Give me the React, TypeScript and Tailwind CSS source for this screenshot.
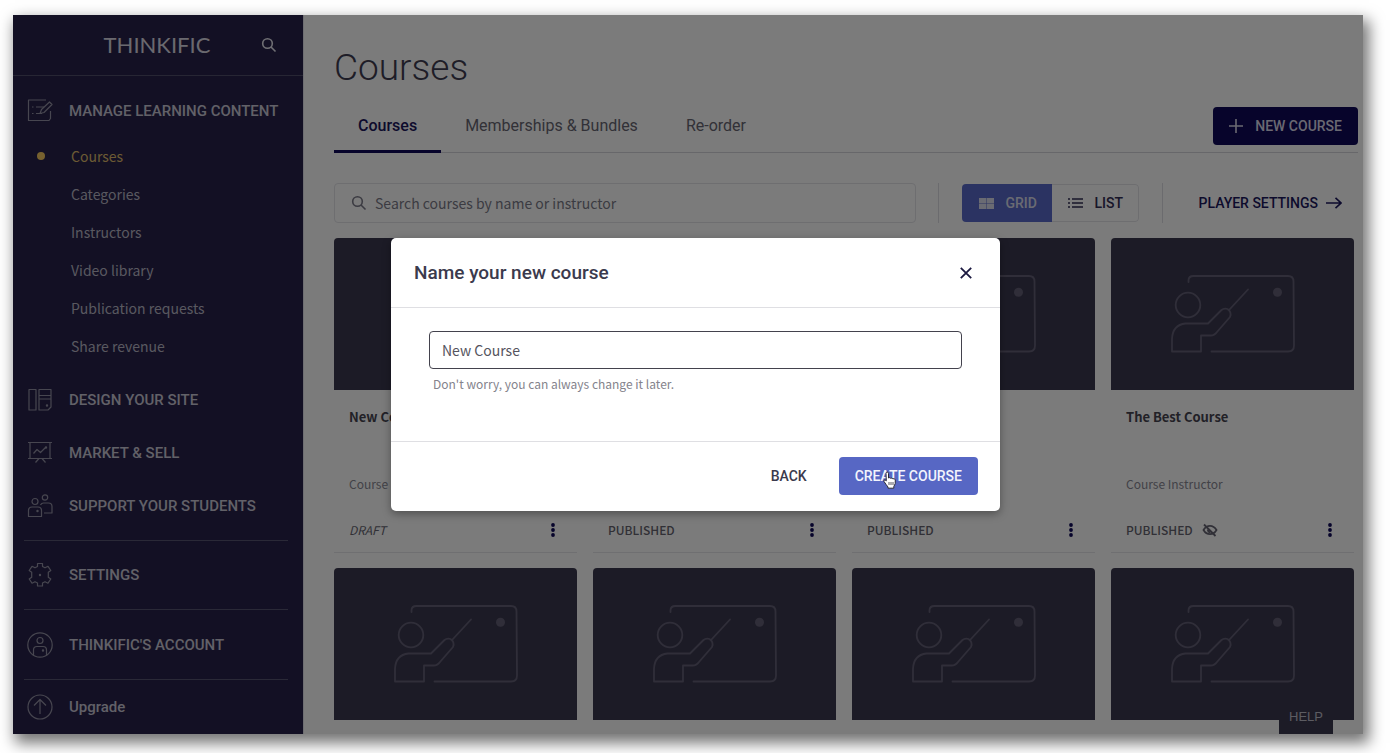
import React from "react";

const heading = "font-[Roboto,sans-serif]";

interface IconProps {
  className?: string;
  children: React.ReactNode;
}

const LineIcon: React.FC<IconProps> = ({ className = "", children }) => (
  <svg
    viewBox="0 0 26 26"
    className={`w-[26px] h-[26px] shrink-0 ${className}`}
    fill="none"
    stroke="currentColor"
    strokeWidth="1.2"
    strokeLinejoin="round"
    aria-hidden="true"
  >
    {children}
  </svg>
);

const ContentIcon = () => (
  <LineIcon>
    <path d="M19 2H1.500v20.500h20.500l1.500-2V13" />
    <path d="M5 9h1.500M5 15.500h1.500M9 9h8M9 15.500h6" />
    <path d="M13 15.500l1.500-4L22.500 4l2.500 2.500-8 8z" />
  </LineIcon>
);

const DesignIcon = () => (
  <LineIcon>
    <path d="M2 2.500h7v20.500H2zM12 2.500h12v6H12zM12 8.500h12v11.500l-3 3h-9zM12 12h12" />
    <circle cx="20" cy="18.500" r="0.600" fill="currentColor" />
  </LineIcon>
);

const MarketIcon = () => (
  <LineIcon>
    <path d="M1 2.500h24M3 2.500v15.500M23 2.500v15.500M1 18.500h24M12 18.500l-3.500 4M15 18.500l3.500 4" />
    <path d="M6.500 13.500l3.500-4 3.500 3 5-5" />
    <circle cx="19" cy="7.500" r="0.600" fill="currentColor" />
  </LineIcon>
);

const StudentsIcon = () => (
  <LineIcon>
    <circle cx="8" cy="8.500" r="3" />
    <circle cx="18" cy="4.500" r="2.700" />
    <path d="M1.500 23.500v-6q0-3.500 3.500-3.500h6q3.500 0 3.500 3.500v6z" />
    <path d="M13.500 12q1-2 3-2h5q3.500 0 3.500 3.500v6.500h-8" />
    <circle cx="10.500" cy="18" r="0.600" fill="currentColor" />
  </LineIcon>
);

const GearIcon = () => (
  <LineIcon>
    <path d="M10.500 1.500h5v3l2.500 1.300 3-1.500 2.800 4.200-2.500 1.800v4.900l2.500 1.800-2.800 4.200-3-1.500-2.500 1.300v3h-5v-3L8 19.700l-3 1.500L2.200 17l2.500-1.800v-4.900L2.200 8.500 5 4.300l3 1.500 2.500-1.300z" />
    <circle cx="13" cy="13" r="0.600" fill="currentColor" />
  </LineIcon>
);

const AccountIcon = () => (
  <LineIcon>
    <circle cx="13" cy="13" r="12.200" />
    <circle cx="13" cy="8.500" r="3" />
    <path d="M6.500 23v-5q0-3.500 3.500-3.500h6q3.500 0 3.500 3.500v5" />
    <circle cx="16" cy="18.500" r="0.600" fill="currentColor" />
  </LineIcon>
);

const UpgradeIcon = () => (
  <LineIcon>
    <circle cx="13" cy="13" r="12" />
    <path d="M13 20V6M7 11.500L13 5.500l6 6" />
  </LineIcon>
);

const SearchIcon = ({ className = "" }: { className?: string }) => (
  <svg
    viewBox="0 0 16 16"
    className={`w-4 h-4 shrink-0 ${className}`}
    fill="none"
    stroke="currentColor"
    strokeWidth="1.6"
    aria-hidden="true"
  >
    <circle cx="6.500" cy="6.500" r="4.800" />
    <path d="M10 10l4.500 4.500" />
  </svg>
);

const TeacherArt = () => (
  <svg
    viewBox="0 0 128 82"
    className="w-32 h-[82px] text-[#605d73]"
    fill="none"
    stroke="currentColor"
    strokeWidth="1.8"
    strokeLinecap="round"
    strokeLinejoin="round"
    aria-hidden="true"
  >
    <path d="M19.500 9V7.500q0-4.500 5-4.500h94.500q5.500 0 5.500 5.500l.5 64q0 6-6 6H42.500" />
    <circle cx="19" cy="32" r="12.300" />
    <circle cx="108.500" cy="19.300" r="4.500" fill="currentColor" stroke="none" />
    <path d="M3 78.500V66Q3.500 52 16.500 50.500H39L52.500 37q2.500-2 6-1 4.500 3 2.500 8L48 59q-2.500 3.500-6.500 3.500H32v16z" />
    <path d="M60.500 36.500l18.500-20" />
  </svg>
);

const EyeOffIcon = () => (
  <svg viewBox="0 0 16 16" className="w-4 h-4 text-[#62616f]" fill="none" stroke="currentColor" strokeWidth="1.8" aria-label="Hidden">
    <path d="M1.500 8Q4 3.800 8 3.800T14.500 8Q12 12.200 8 12.200T1.500 8z" />
    <path d="M5.800 7.500q.2 2.700 2.700 3" />
    <path d="M2 2.500l11.500 11.500" />
  </svg>
);

interface NavItemProps {
  icon: React.ReactNode;
  label: string;
  className: string;
}

const NavItem: React.FC<NavItemProps> = ({ icon, label, className }) => (
  <a href="#" className={`flex items-center gap-4 pl-[14px] text-[#8f8da0] ${className}`}>
    {icon}
    <span className={`${heading} text-[15px] leading-5 font-medium text-[#c4c2d0]`}>{label}</span>
  </a>
);

const subItems = ["Courses", "Categories", "Instructors", "Video library", "Publication requests", "Share revenue"];

const Divider = () => <div className="h-px ml-[11px] mr-[15px] bg-[#55526e]" />;

const Sidebar = () => (
  <nav className="w-[290px] shrink-0 bg-[#262148]">
    <div className="flex items-center justify-end h-[61px] border-b border-[#4f4c68] pr-[26px] gap-9">
      <span className="w-[136px] text-center font-[Lato,sans-serif] text-[22px] leading-7 text-[#d5d3df]">
        THINKIFIC
      </span>
      <button type="button" aria-label="Search" className="text-[#e0dfe8]">
        <SearchIcon />
      </button>
    </div>
    <div className="py-2">
      <NavItem icon={<ContentIcon />} label="MANAGE LEARNING CONTENT" className="h-[53px]" />
      <ul className="mb-2">
        {subItems.map((item, i) => (
          <li key={item} className="flex items-center h-[38px] pl-6">
            <span className={`w-2 h-2 rounded-full mr-[26px] ${i === 0 ? "bg-[#eec25e]" : ""}`} />
            <a href="#" className={`text-sm leading-5 ${i === 0 ? "text-[#d9b568]" : "text-[#b3b1c0]"}`}>
              {item}
            </a>
          </li>
        ))}
      </ul>
      <NavItem icon={<DesignIcon />} label="DESIGN YOUR SITE" className="h-[53px]" />
      <NavItem icon={<MarketIcon />} label="MARKET & SELL" className="h-[53px]" />
      <NavItem icon={<StudentsIcon />} label="SUPPORT YOUR STUDENTS" className="h-[53px]" />
    </div>
    <Divider />
    <NavItem icon={<GearIcon />} label="SETTINGS" className="h-[68px]" />
    <Divider />
    <NavItem icon={<AccountIcon />} label="THINKIFIC'S ACCOUNT" className="h-[69px]" />
    <Divider />
    <NavItem icon={<UpgradeIcon />} label="Upgrade" className="h-[54px]" />
  </nav>
);

interface Course {
  id: number;
  title?: string;
  instructor?: string;
  status?: string;
  hidden?: boolean;
}

const courses: Course[] = [
  { id: 1, title: "New Course", instructor: "Course Instructor", status: "DRAFT" },
  { id: 2, status: "PUBLISHED" },
  { id: 3, status: "PUBLISHED" },
  { id: 4, title: "The Best Course", instructor: "Course Instructor", status: "PUBLISHED", hidden: true },
  { id: 5 },
  { id: 6 },
  { id: 7 },
  { id: 8 },
];

const CourseCard: React.FC<{ course: Course }> = ({ course }) => (
  <article>
    <div className="flex items-center justify-center h-[152px] rounded-t bg-[#39374c]">
      <TeacherArt />
    </div>
    {course.status && (
      <div className="pt-[17px] px-[15px] pb-3 border-b border-[#dedee2]">
        <h2 className="h-5 text-[13px] leading-5 font-bold text-[#44434f]">{course.title}</h2>
        <p className="mt-[47px] h-5 text-xs leading-5 text-[#85848f]">{course.instructor}</p>
        <div className="mt-[26px] flex items-center gap-[9px] h-5">
          {course.status === "DRAFT" ? (
            <span className="text-xs leading-5 italic text-[#62616c]">DRAFT</span>
          ) : (
            <span className="text-xs leading-5 font-medium text-[#62616c]">{course.status}</span>
          )}
          {course.hidden && <EyeOffIcon />}
          <button type="button" aria-label="Course options" className="ml-auto mr-[7px] flex text-[#0e0856]">
            <svg viewBox="0 0 4 14" className="w-1 h-[14px]" fill="currentColor" aria-hidden="true">
              <circle cx="2" cy="2" r="1.900" />
              <circle cx="2" cy="7" r="1.900" />
              <circle cx="2" cy="12" r="1.900" />
            </svg>
          </button>
        </div>
      </div>
    )}
  </article>
);

const Toolbar = () => (
  <div className="flex items-center mt-[30px] mb-[15px]">
    <label className="flex flex-1 items-center gap-2 h-10 px-4 border border-[#dcdce1] rounded text-[#777684]">
      <SearchIcon />
      <input
        type="text"
        aria-label="Search courses"
        placeholder="Search courses by name or instructor"
        className="flex-1 text-sm leading-5 outline-none placeholder:text-[#777684]"
      />
    </label>
    <div className="w-px h-10 ml-[22px] mr-[23px] bg-[#d6d6dc]" />
    <div className={`flex h-[38px] rounded overflow-hidden ${heading} text-sm font-medium`}>
      <button type="button" className="flex items-center w-[90px] pl-[17px] gap-3 bg-[#5767c4] text-[#d5d6e6]">
        <svg viewBox="0 0 15 11" className="w-[15px] h-[11px]" fill="currentColor" aria-hidden="true">
          <path d="M0 0h7v5H0zM7.500 0H15v5H7.500zM0 5.500h7V11H0zM7.500 5.500H15V11H7.500z" />
        </svg>
        GRID
      </button>
      <button
        type="button"
        className="flex items-center w-[87px] pl-4 gap-3 border border-l-0 border-[#dcdce1] rounded-r text-[#302c52]"
      >
        <svg viewBox="0 0 15 10" className="w-[15px] h-[10px]" stroke="currentColor" strokeWidth="1.600" aria-hidden="true">
          <path d="M0 1h2M0 5h2M0 9h2M4 1h11M4 5h11M4 9h11" />
        </svg>
        LIST
      </button>
    </div>
    <div className="w-px h-10 ml-[23px] mr-9 bg-[#d6d6dc]" />
    <a href="#" className={`flex items-center gap-2 mr-3 ${heading} text-sm leading-5 font-medium text-[#1b165a]`}>
      PLAYER SETTINGS
      <svg viewBox="0 0 16 12" className="w-4 h-3" fill="none" stroke="currentColor" strokeWidth="1.600" aria-hidden="true">
        <path d="M0 6h15M9.500 .8L15 6l-5.500 5.200" />
      </svg>
    </a>
  </div>
);

const CoursesPage = () => (
  <main className="flex-1 bg-[#f7f7f7] border-l border-[#dddde4] pl-[30px] pr-[9px] pb-[14px]">
    <h1 className={`${heading} pt-[30px] pb-4 text-[37px] leading-[46px] font-light text-[#3d3b4f]`}>Courses</h1>
    <div className={`flex items-start justify-between h-[46px] -mr-1 border-b border-[#cfcfd5] ${heading}`}>
      <div className="flex h-[46px] text-base">
        <a href="#" className="px-6 h-[46px] leading-[38px] font-medium text-[#1b165a] border-b-[3px] border-[#0e0856]">
          Courses
        </a>
        <a href="#" className="px-6 leading-[38px] text-[#64636f]">
          Memberships &amp; Bundles
        </a>
        <a href="#" className="px-6 leading-[38px] text-[#64636f]">
          Re-order
        </a>
      </div>
      <button
        type="button"
        className="flex items-center gap-3 h-[38px] px-4 rounded bg-[#0e0856] text-sm font-medium text-[#d5d3e4]"
      >
        <svg viewBox="0 0 14 14" className="w-[14px] h-[14px]" stroke="currentColor" strokeWidth="1.600" aria-hidden="true">
          <path d="M7 0v14M0 7h14" />
        </svg>
        NEW COURSE
      </button>
    </div>
    <Toolbar />
    <div className="grid grid-cols-4 gap-x-4 gap-y-[15px]">
      {courses.map((course) => (
        <CourseCard key={course.id} course={course} />
      ))}
    </div>
  </main>
);

const HandCursor = () => (
  <svg viewBox="0 0 14 18" className="absolute left-[44px] top-[14px] w-[14px] h-[18px]" aria-hidden="true">
    <path
      d="M3 2.500q0-1.500 1.200-1.500t1.300 1.500V7q1.500-1 2.200.3 1.500-.8 2.100.5 2-.8 2.500 1.200 .6 4-1.500 6.500v1.700H5V16Q3 13.500 1 10.500q-.5-1.700 1-1.700l1.300 1z"
      fill="#ffffff"
      stroke="#2b2a35"
      strokeWidth="1"
    />
    <path d="M6 11v3M8 11v3M10 11v3" stroke="#2b2a35" strokeWidth="0.800" />
  </svg>
);

const NameCourseDialog = () => (
  <div className="absolute inset-0 flex items-center justify-center pl-[15px] bg-black/50">
    <div
      role="dialog"
      aria-labelledby="dialog-title"
      className="w-[609px] max-w-full rounded-[5px] bg-white shadow-[0_3px_8px_rgba(0,0,0,0.35)]"
    >
      <div className="flex items-center justify-between h-[70px] pl-[23px] pr-7 border-b border-[#dfdfe3]">
        <h2 id="dialog-title" className={`${heading} text-[19px] leading-6 font-medium text-[#3b3a4d]`}>
          Name your new course
        </h2>
        <button type="button" aria-label="Close" className="text-[#1b1940]">
          <svg viewBox="0 0 12 12" className="w-3 h-3" stroke="currentColor" strokeWidth="1.800" aria-hidden="true">
            <path d="M.8 .8l10.400 10.400M11.200 .8L.8 11.200" />
          </svg>
        </button>
      </div>
      <div className="px-[38px] pt-[23px] pb-[47px]">
        <input
          type="text"
          aria-label="Course name"
          defaultValue="New Course"
          className="block w-full h-[38px] px-3 border border-[#43424d] rounded text-sm leading-5 text-[#55545e] outline-none"
        />
        <p className="mt-[5px] pl-1 text-xs leading-5 text-[#84838c]">Don't worry, you can always change it later.</p>
      </div>
      <div className={`flex items-start justify-end gap-4 h-[70px] pt-[15px] pr-[22px] border-t border-[#dfdfe3] ${heading} text-sm font-medium`}>
        <button type="button" className="h-[38px] px-4 text-[#3b3a4d]">
          BACK
        </button>
        <button type="button" className="relative h-[38px] px-4 rounded bg-[#5767c4] text-[#f3f4fc]">
          CREATE COURSE
          <HandCursor />
        </button>
      </div>
    </div>
  </div>
);

const App = () => (
  <div className="flex min-h-screen bg-white pt-[15px] pr-7 pb-[19px] pl-[13px] font-['Noto_Sans_CJK_JP',sans-serif]">
    <div className="relative flex flex-1 shadow-[4px_7px_14px_2px_rgba(0,0,0,0.55)]">
      <Sidebar />
      <CoursesPage />
      <button
        type="button"
        className="absolute bottom-0 right-[30px] w-[54px] h-[34px] bg-[#39374c] font-['Liberation_Sans',sans-serif] text-[13px] text-[#b9b8c4]"
      >
        HELP
      </button>
      <NameCourseDialog />
    </div>
  </div>
);

export default App;
